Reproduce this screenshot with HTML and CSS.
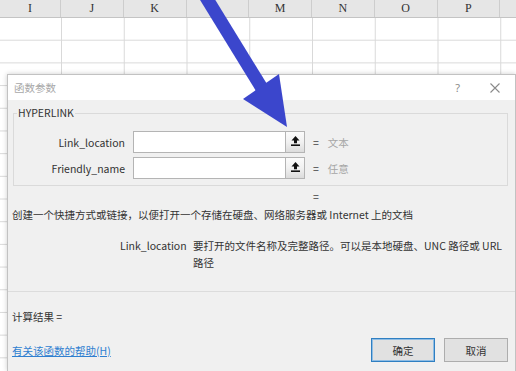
FILE: index.html
```html
<!DOCTYPE html>
<html lang="zh-CN">
<head>
<meta charset="utf-8">
<title>函数参数</title>
<link rel="stylesheet" href="styles.css">
</head>
<body>
<div class="sheet">
  <div class="colhead">
    <span>I</span><span>J</span><span>K</span><span>L</span><span>M</span><span>N</span><span>O</span><span>P</span>
  </div>
  <div class="cells"></div>
</div>

<div class="dialog">
  <div class="titlebar">
    <span class="title">函数参数</span>
    <span class="help">?</span>
    <svg class="close" width="10" height="10" viewBox="0 0 10 10"><path d="M0.5 0.5 L9.5 9.5 M9.5 0.5 L0.5 9.5" stroke="#8a8a8a" stroke-width="1.1" fill="none"/></svg>
  </div>
  <div class="dbody">
    <fieldset class="group">
      <legend>HYPERLINK</legend>
      <div class="arg">
        <label>Link_location</label>
        <div class="field"><div class="input"></div><div class="pick"><svg width="9" height="10" viewBox="0 0 9 10"><path d="M4.5 0 L8.5 4.5 L6 4.5 L6 7.2 L3 7.2 L3 4.5 L0.5 4.5 Z" fill="#111"/><rect x="0" y="8.4" width="9" height="1.6" fill="#111"/></svg></div></div>
        <span class="eq">=</span><span class="val">文本</span>
      </div>
      <div class="arg">
        <label>Friendly_name</label>
        <div class="field"><div class="input"></div><div class="pick"><svg width="9" height="10" viewBox="0 0 9 10"><path d="M4.5 0 L8.5 4.5 L6 4.5 L6 7.2 L3 7.2 L3 4.5 L0.5 4.5 Z" fill="#111"/><rect x="0" y="8.4" width="9" height="1.6" fill="#111"/></svg></div></div>
        <span class="eq">=</span><span class="val">任意</span>
      </div>
    </fieldset>
    <div class="result-eq">=</div>
    <p class="desc">创建一个快捷方式或链接，以便打开一个存储在硬盘、网络服务器或 Internet 上的文档</p>
    <div class="param">
      <span class="pname">Link_location</span>
      <span class="pdesc">要打开的文件名称及完整路径。可以是本地硬盘、UNC 路径或 URL 路径</span>
    </div>
  </div>
  <div class="sep"></div>
  <div class="footer">
    <div class="calc">计算结果 =</div>
    <div class="bottom">
      <a class="helplink" href="#">有关该函数的帮助(H)</a>
      <div class="btns">
        <button class="btn primary">确定</button>
        <button class="btn">取消</button>
      </div>
    </div>
  </div>
</div>

<svg class="arrow" width="516" height="371" viewBox="0 0 516 371">
  <line x1="204" y1="-6" x2="263" y2="90" stroke="#3b46cc" stroke-width="13"/>
  <polygon points="243,99 279,74 287,127" fill="#3b46cc"/>
</svg>
</body>
</html>
```

FILE: styles.css
```css
* { box-sizing: border-box; }
html, body { margin: 0; padding: 0; }
body {
  width: 516px;
  height: 371px;
  overflow: hidden;
  position: relative;
  background: #fff;
  font-family: "Noto Sans CJK SC", "Noto Sans", sans-serif;
  font-size: 10.5px;
  color: #333;
}

/* spreadsheet background */
.sheet { width: 516px; overflow: hidden; }
.colhead {
  display: grid;
  grid-template-columns: 61px repeat(7, 62.75px) 16px;
  height: 18px;
  background: #e6e6e6;
  border-bottom: 1px solid #c4c4c4;
}
.colhead span {
  border-right: 1px solid #cdcdcd;
  text-align: center;
  font-family: "Liberation Serif", serif;
  font-size: 12px;
  line-height: 17px;
  color: #333;
  white-space: nowrap;
}
.cells {
  height: 353px;
  background-image:
    linear-gradient(to right, #d9d9d9 1px, transparent 1px),
    linear-gradient(to bottom, transparent 21.7px, #d9d9d9 21.7px);
  background-size: 62.75px 100%, 100% 22.7px;
  background-position: 61px 0, 0 0;
}

/* dialog window */
.dialog {
  position: absolute;
  left: 7px;
  top: 74px;
  width: 509px;
  height: 297px;
  background: #f0f0f0;
  border: 1px solid #c2c2c2;
  border-bottom: none;
  box-shadow: 0 0 5px rgba(0, 0, 0, 0.2);
}
.titlebar {
  height: 25px;
  display: flex;
  align-items: center;
  background: #fff;
  padding-left: 6px;
}
.title { color: #a8a8a8; }
.help {
  margin-left: auto;
  color: #8a8a8a;
  font-family: "Noto Sans", sans-serif;
  font-size: 11px;
}
.close { margin-left: 30px; margin-right: 15px; }

.dbody {
  height: 191px;
  padding: 0 7px 0 5px;
  overflow: hidden;
}
.group {
  margin: 6px 0 0 0;
  padding: 11px 0 6px 0;
  border: 1px solid #dadada;
  min-width: 0;
}
.group legend {
  margin-left: 3px;
  padding: 0 1px;
  line-height: 14px;
  color: #333;
}
.arg {
  display: flex;
  align-items: center;
  height: 22px;
}
.arg + .arg { margin-top: 4px; }
.arg label {
  width: 111px;
  text-align: right;
  margin-right: 8px;
  color: #333;
}
.field { display: flex; }
.input {
  width: 153px;
  height: 22px;
  background: #fff;
  border: 1px solid #b4b4b4;
}
.pick {
  width: 19px;
  height: 22px;
  border: 1px solid #b4b4b4;
  border-left: none;
  background: linear-gradient(to bottom, #fbfbfb 0%, #f1f1f1 50%, #dcdcdc 100%);
  display: flex;
  justify-content: center;
  padding-top: 4px;
}
.eq { margin-left: 8px; color: #444; }
.val { margin-left: 9px; color: #a6a6a6; }

.result-eq {
  margin: 4px 0 0 300px;
  line-height: 14px;
  color: #444;
}
.desc {
  margin: 4px 0 0 -1px;
  line-height: 14px;
}
.param {
  display: flex;
  margin-top: 15px;
  padding-left: 107px;
  line-height: 17px;
}
.pname { width: 73px; flex: none; }
.pdesc { width: 316px; }

.sep { border-top: 1px solid #dcdcdc; }

.footer { padding: 0 7px 0 4px; }
.calc {
  margin-top: 18px;
  line-height: 14px;
}
.bottom {
  display: flex;
  align-items: center;
  justify-content: space-between;
  margin-top: 14px;
}
.helplink {
  color: #2f7fd0;
  text-decoration: underline;
}
.btns { display: flex; gap: 9px; }
.btn {
  width: 64px;
  height: 24px;
  padding: 0;
  background: #e1e1e1;
  border: 1px solid #adadad;
  font-family: inherit;
  font-size: 10.5px;
  color: #333;
}
.btn.primary { border: 1px solid #2f7fc2; box-shadow: inset 0 0 0 1px #8fbde4; }

/* annotation arrow */
.arrow {
  position: absolute;
  left: 0;
  top: 0;
  pointer-events: none;
}
```
